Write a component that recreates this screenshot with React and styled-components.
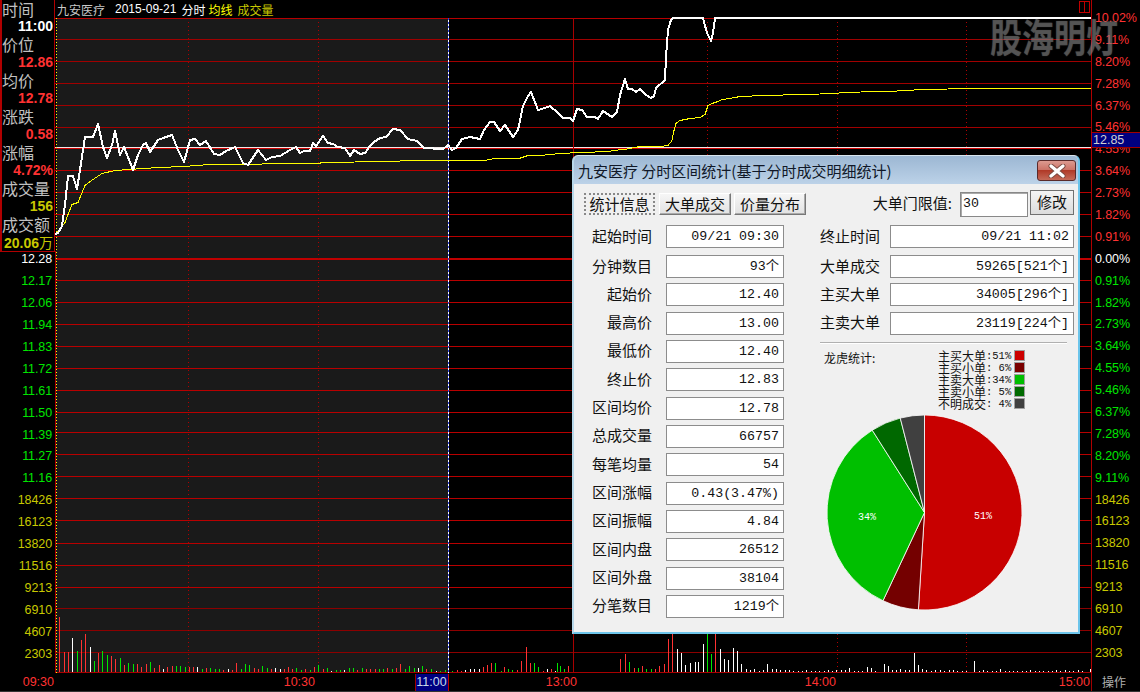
import React from "react";
import styled, { createGlobalStyle } from "styled-components";

const GlobalStyle = createGlobalStyle`
  html, body {
    margin: 0;
    padding: 0;
    background: #000;
    overflow: hidden;
  }
  * { box-sizing: border-box; }
`;

const LATIN = `"Liberation Sans", "Noto Sans CJK SC", sans-serif`;
const CJK = `"Noto Sans CJK SC", "Liberation Sans", sans-serif`;
const MONO = `"Liberation Mono", "Noto Sans CJK SC", monospace`;

const RED = "#ff3232";
const GREEN = "#00e600";
const YELLOW = "#c8c800";

const quote = [
  ["时间", "11:00", "#fff"],
  ["价位", "12.86", RED],
  ["均价", "12.78", RED],
  ["涨跌", "0.58", RED],
  ["涨幅", "4.72%", RED],
  ["成交量", "156", YELLOW],
];

const leftPrices = ["12.28", "12.17", "12.06", "11.94", "11.83", "11.72", "11.61", "11.50", "11.39", "11.27", "11.16"];
const volumes = ["18426", "16123", "13820", "11516", "9213", "6910", "4607", "2303"];
const upPercents = ["10.02%", "9.11%", "8.20%", "7.28%", "6.37%", "5.46%", "4.55%", "3.64%", "2.73%", "1.82%", "0.91%"];
const downPercents = ["0.91%", "1.82%", "2.73%", "3.64%", "4.55%", "5.46%", "6.37%", "7.28%", "8.20%", "9.11%"];

const gridY = [39, 61, 83, 105, 127, 170, 192, 214, 236, 280, 302, 324, 346, 368, 390, 412, 432, 454, 476, 498, 520, 543, 565, 587, 608, 630, 652];
const dottedX = [188, 318, 707, 837, 966];

const pricePoints = "55,234 58,233 62,226 65,205 68,176 73,176 77,189 80,170 85,137 93,137 98,124 103,147 107,158 112,145 115,131 120,155 124,147 133,170 138,155 143,145 146,143 150,152 158,140 163,138 172,135 178,150 184,162 190,140 195,139 200,145 206,141 214,154 220,155 226,151 235,147 243,163 248,165 258,150 266,160 272,157 280,156 290,150 296,147 300,153 304,151 310,151 313,143 316,146 323,136 328,143 333,144 338,147 345,148 350,156 354,150 360,154 365,153 370,146 374,142 380,138 386,137 393,129 400,130 408,139 417,141 424,148 430,148 437,149 443,149 448,145 452,150 456,148 462,139 470,137 480,139 484,130 490,122 494,122 500,131 505,125 513,137 518,130 523,106 528,96 531,92 538,110 545,108 550,106 558,113 563,118 570,118 573,121 577,109 582,110 587,117 595,117 598,119 603,111 612,117 617,112 620,95 625,79 628,89 632,89 636,92 640,89 646,95 651,98 654,96 656,88 665,80 666,57 668,30 671,20 673,18 703,18 707,33 711,41 713,33 715,18 1091,18";
const averagePoints = "55,234 60,229 65,222 68,214 72,204 78,202 85,185 93,179 102,173 115,170 143,168 160,167 183,166 210,164 247,164 277,163 320,163 321,162 390,161 410,160 484,160 495,158 519,158 528,155 540,155 560,153 580,152 610,151 612,150 625,149 640,146 660,146 668,145 672,140 674,130 676,123 680,120 690,118 700,117 705,114 708,105 712,103 718,101 722,99 730,98 740,96 765,95 838,93 840,92 882,91 912,90 916,89 980,88 1091,88";

// volume bars: [x, height, r/g/w]
const volumeBars = [
  [59,55,"r"],[64,20,"r"],[68,20,"r"],[72,34,"w"],[77,21,"g"],[81,32,"r"],[85,38,"r"],[90,25,"w"],[94,11,"g"],[98,19,"r"],
  [102,21,"g"],[107,17,"g"],[111,16,"r"],[115,13,"r"],[120,14,"g"],[124,7,"r"],[128,9,"g"],[133,8,"g"],[137,8,"r"],[141,5,"r"],
  [146,8,"r"],[150,10,"g"],[154,4,"r"],[159,7,"r"],[163,3,"w"],[167,5,"r"],[172,6,"r"],[176,6,"g"],[180,6,"g"],[185,5,"g"],
  [189,5,"r"],[193,5,"r"],[197,5,"w"],[202,3,"g"],[206,4,"r"],[210,4,"g"],[215,3,"g"],[219,3,"g"],[223,2,"r"],[228,3,"w"],
  [232,2,"r"],[236,9,"r"],[241,3,"g"],[245,8,"g"],[249,7,"g"],[254,4,"r"],[258,3,"r"],[262,6,"g"],[267,4,"g"],[271,3,"r"],
  [275,4,"w"],[280,3,"w"],[284,3,"r"],[288,5,"r"],[292,3,"r"],[296,4,"g"],[301,2,"g"],[305,3,"r"],[310,2,"g"],[314,5,"r"],
  [318,7,"g"],[323,3,"r"],[327,4,"g"],[331,1,"w"],[336,2,"g"],[340,2,"g"],[344,2,"w"],[349,4,"g"],[353,4,"g"],[357,2,"r"],
  [362,4,"g"],[366,3,"r"],[370,3,"r"],[375,3,"r"],[379,3,"g"],[383,3,"g"],[387,4,"r"],[392,3,"g"],[396,4,"r"],[400,8,"r"],
  [405,3,"g"],[409,6,"g"],[414,4,"g"],[418,4,"w"],[422,6,"g"],[426,3,"r"],[431,3,"g"],[436,1,"w"],[440,1,"g"],[445,2,"g"],
  [452,1,"g"],[457,2,"r"],[461,1,"r"],[465,2,"w"],[470,3,"w"],[474,3,"w"],[479,3,"w"],[483,5,"r"],[487,7,"r"],[491,9,"r"],
  [495,9,"g"],[501,1,"g"],[504,5,"r"],[508,3,"g"],[512,2,"g"],[517,2,"r"],[521,11,"r"],[526,25,"r"],[530,9,"r"],[534,9,"g"],
  [538,5,"g"],[543,1,"r"],[547,3,"w"],[551,3,"r"],[555,1,"w"],[557,9,"g"],[560,6,"g"],[564,3,"g"],[568,6,"r"],
  [620,13,"r"],[625,18,"r"],[629,10,"g"],[634,4,"r"],[638,4,"g"],[642,6,"r"],[646,3,"g"],[651,3,"g"],[655,3,"r"],[659,6,"r"],
  [664,8,"r"],[668,33,"r"],[672,38,"r"],[677,23,"w"],[681,19,"w"],[685,7,"w"],[690,9,"w"],[695,10,"w"],[698,10,"w"],[703,28,"w"],
  [707,38,"g"],[711,18,"g"],[715,38,"r"],[720,23,"w"],[724,13,"w"],[728,12,"w"],[733,24,"w"],[737,21,"w"],[741,8,"w"],[746,3,"w"],
  [750,2,"w"],[754,3,"w"],[759,1,"w"],[763,2,"w"],[767,8,"w"],[772,3,"w"],[776,3,"w"],[780,2,"w"],[785,2,"w"],[789,2,"w"],
  [793,1,"w"],[798,1,"w"],[802,1,"w"],[806,2,"w"],[811,1,"w"],[815,1,"w"],[819,1,"w"],[824,1,"w"],[828,2,"w"],[832,1,"w"],
  [836,2,"w"],[841,2,"w"],[845,2,"w"],[849,4,"w"],[854,1,"w"],[858,1,"w"],[862,1,"w"],[867,5,"w"],[871,4,"w"],[875,1,"w"],
  [884,8,"w"],[888,6,"w"],[892,2,"w"],[896,2,"w"],[900,3,"w"],[905,2,"w"],[909,2,"w"],[914,19,"w"],[918,7,"w"],[922,3,"w"],
  [926,2,"w"],[931,1,"w"],[935,2,"w"],[940,2,"w"],[944,1,"w"],[949,2,"w"],[953,2,"w"],[957,1,"w"],[962,1,"w"],[966,1,"w"],
  [974,11,"w"],[979,1,"w"],[983,2,"w"],[987,1,"w"],[992,1,"w"],[996,1,"w"],[1000,3,"w"],[1005,1,"w"],[1009,1,"w"],[1013,1,"w"],
  [1017,1,"w"],[1022,1,"w"],[1026,1,"w"],[1030,2,"w"],[1035,1,"w"],[1039,1,"w"],[1043,1,"w"],[1048,1,"w"],[1052,1,"w"],[1056,2,"w"],
  [1060,1,"w"],[1065,2,"w"],[1069,1,"w"],[1073,1,"w"],[1078,2,"w"],[1082,1,"w"],[1090,3,"w"],
];
const barColors = { r: "#ff3232", g: "#00e600", w: "#ffffff" };

const leftRows = [
  ["起始时间", "09/21 09:30"],
  ["分钟数目", "93个"],
  ["起始价", "12.40"],
  ["最高价", "13.00"],
  ["最低价", "12.40"],
  ["终止价", "12.83"],
  ["区间均价", "12.78"],
  ["总成交量", "66757"],
  ["每笔均量", "54"],
  ["区间涨幅", "0.43(3.47%)"],
  ["区间振幅", "4.84"],
  ["区间内盘", "26512"],
  ["区间外盘", "38104"],
  ["分笔数目", "1219个"],
];
const rightRows = [
  ["终止时间", "09/21 11:02"],
  ["大单成交", "59265[521个]"],
  ["主买大单", "34005[296个]"],
  ["主卖大单", "23119[224个]"],
];
const legend = [
  ["主买大单", ":51%", "#cc0000"],
  ["主买小单", ": 6%", "#7a0000"],
  ["主卖大单", ":34%", "#00bf00"],
  ["主卖小单", ": 5%", "#006a00"],
  ["不明成交", ": 4%", "#404040"],
];

// pie slices, cumulative percent from twelve o'clock
const PIE_R = 97.5;
const pieSlices = [
  [0, 51, "#c80000"],
  [51, 57, "#740000"],
  [57, 91, "#00bf00"],
  [91, 96, "#006800"],
  [96, 100, "#404040"],
];
function piePoint(percent) {
  const a = (percent / 100) * Math.PI * 2;
  return [PIE_R + PIE_R * Math.sin(a), PIE_R - PIE_R * Math.cos(a)];
}
function slicePath(from, to) {
  const [x1, y1] = piePoint(from);
  const [x2, y2] = piePoint(to);
  const large = to - from > 50 ? 1 : 0;
  return `M${PIE_R} ${PIE_R} L${x1} ${y1} A${PIE_R} ${PIE_R} 0 ${large} 1 ${x2} ${y2} Z`;
}

const Screen = styled.div`
  position: relative;
  width: 1140px;
  height: 692px;
  background: #000;
  display: grid;
  grid-template-columns: 55px 1036px 49px;
  grid-template-rows: 673px 19px;
  overflow: hidden;
  font-family: ${LATIN};
`;

const LeftRail = styled.div`
  display: flex;
  flex-direction: column;
`;

const QuoteBox = styled.div`
  height: 252px;
  border-left: 2px solid #b00000;
  border-right: 1px solid #b00000;
  border-bottom: 1px solid #b00000;
`;

const QuoteLabel = styled.div`
  height: 20px;
  line-height: 20px;
  font-family: ${CJK};
  font-size: 16px;
  color: #c0c0c0;
  white-space: nowrap;

  &:first-child {
    height: 18px;
    line-height: 18px;
  }
`;

const QuoteValue = styled.div`
  height: 16px;
  line-height: 16px;
  padding-right: 1px;
  text-align: right;
  font-size: 14px;
  font-weight: 700;
  color: ${(p) => p.$color};
  white-space: nowrap;

  span {
    font-family: ${CJK};
    font-weight: 400;
  }
`;

const AxisList = styled.div`
  display: flex;
  flex-direction: column;
  gap: ${(p) => p.$gap};
  padding-top: ${(p) => p.$pad || "0"};
`;

const AxisLabel = styled.div`
  height: 14px;
  line-height: 14px;
  font-size: 12.5px;
  letter-spacing: -0.1px;
  color: ${(p) => p.$color};
  text-align: ${(p) => p.$align};
  padding-right: ${(p) => (p.$align === "right" ? "3px" : "0")};
  padding-left: ${(p) => (p.$align === "left" ? "3px" : "0")};
  white-space: nowrap;
`;

const ChartColumn = styled.div`
  display: flex;
  flex-direction: column;
`;

const ChartHeader = styled.div`
  height: 18px;
  flex: none;
  display: flex;
  align-items: center;
  padding-left: 2px;
  font-family: ${CJK};
  font-size: 12px;
  white-space: nowrap;
`;

const HeaderItem = styled.span`
  color: ${(p) => p.$color};
  margin-right: ${(p) => p.$gap}px;
  font-family: ${(p) => (p.$latin ? LATIN : CJK)};
`;

const ChartSvg = styled.svg`
  display: block;
  flex: none;
  overflow: visible;
`;

const RightRail = styled.div`
  position: relative;
  border-left: 1px solid #b00000;
`;

const LastPrice = styled.div`
  position: absolute;
  left: 0;
  top: 132px;
  width: 48px;
  height: 16px;
  line-height: 15px;
  padding-left: 1px;
  background: #000080;
  border-top: 1px solid #a00000;
  border-bottom: 1px solid #a00000;
  font-size: 12.5px;
  color: #d0d0d0;
`;

const TimeAxis = styled.div`
  grid-column: 1 / -1;
  display: grid;
  grid-template-columns: 55px 261px 133px 129px 259px 254px 49px;
  border-bottom: 1px solid #333;
`;

const TimeCell = styled.div`
  line-height: 18px;
  font-size: 12.5px;
  color: ${RED};
  text-align: right;
  padding-right: 1px;
`;

const ActiveTime = styled.span`
  display: inline-block;
  width: 34px;
  height: 17px;
  line-height: 17px;
  margin-right: -1px;
  padding-right: 1px;
  background: #000080;
  border-left: 1px solid #a00000;
  border-right: 1px solid #c00000;
  color: #c8d8e8;
  text-align: center;
`;

const ActionCell = styled.div`
  line-height: 18px;
  padding-left: 10px;
  font-family: ${CJK};
  font-size: 12px;
  color: #b0b0b0;
  border-left: 1px solid #a00000;
`;

const Watermark = styled.div`
  position: absolute;
  left: 990px;
  top: 12px;
  font-family: ${CJK};
  font-size: 32px;
  font-weight: 700;
  line-height: 46px;
  color: rgba(128, 128, 128, 0.45);
  text-shadow: 0 0 1px rgba(128, 128, 128, 0.4);
  white-space: nowrap;
  transform: scaleY(1.22);
  pointer-events: none;
`;

const WindowIcon = styled.svg`
  position: absolute;
  left: 1079px;
  top: 1px;
`;

const Dialog = styled.div`
  position: absolute;
  left: 572px;
  top: 155px;
  width: 508px;
  height: 479px;
  display: flex;
  flex-direction: column;
  border-radius: 6px 6px 0 0;
  border: 2px solid #6cc4ea;
  border-top: 1px solid #d8e4ee;
  border-left-color: #b8d8ea;
  background: #f0f0f0;
  overflow: hidden;
  font-family: ${CJK};
  color: #111;
`;

const TitleBar = styled.div`
  position: relative;
  height: 28px;
  flex: none;
  padding-left: 4px;
  line-height: 30px;
  font-size: 15px;
  color: #101828;
  background: linear-gradient(#9cb7d3, #bcd2e8);
  white-space: nowrap;
`;

const CloseButton = styled.div`
  position: absolute;
  right: 2px;
  top: 4px;
  width: 39px;
  height: 21px;
  display: flex;
  align-items: center;
  justify-content: center;
  border: 1px solid #5a2a2a;
  border-radius: 3px;
  background: linear-gradient(#dc9a90 0%, #cc7468 45%, #b03a28 50%, #c46a58 100%);
`;

const DialogBody = styled.div`
  flex: 1;
  padding: 6px 4px 0 10px;
`;

const TopRow = styled.div`
  display: flex;
  align-items: flex-start;
  height: 27px;
  margin-bottom: 8px;
`;

const Tabs = styled.div`
  display: flex;
  gap: 3px;
  padding-top: 3px;
`;

const Tab = styled.div`
  width: 72px;
  height: 22px;
  line-height: 19px;
  text-align: center;
  font-size: 15px;
  background: linear-gradient(#f6f6f6, #e2e2e2);
  border: 1px solid;
  border-color: #fff #777 #777 #fff;
  box-shadow: inset -1px -1px 0 #aaa;
  ${(p) =>
    p.$active &&
    `
    width: 71px;
    background: #f0f0f0;
    border: 2px dotted #888;
    box-shadow: none;
    line-height: 17px;
    margin-right: 1px;
  `}
`;

const Threshold = styled.div`
  margin-left: auto;
  display: flex;
  align-items: flex-start;
  font-size: 15px;
  line-height: 25px;
  white-space: nowrap;
`;

const ThresholdInput = styled.div`
  width: 68px;
  height: 25px;
  margin: 2px 2px 0 8px;
  padding-left: 2px;
  line-height: 21px;
  border: 1px solid #888;
  box-shadow: inset 1px 1px 0 #aaa;
  background: #fff;
  font-family: ${MONO};
  font-size: 13.3px;
`;

const SmallButton = styled.div`
  width: 44px;
  height: 25px;
  line-height: 21px;
  text-align: center;
  font-size: 15px;
  border: 1px solid #707070;
  background: linear-gradient(#f4f4f4, #dcdcdc);
`;

const Columns = styled.div`
  display: flex;
`;

const Column = styled.div`
  width: ${(p) => p.$width}px;
  margin-right: ${(p) => p.$gap || 0}px;
  display: flex;
  flex-direction: column;
`;

const FieldRow = styled.div`
  display: flex;
  align-items: center;
  gap: ${(p) => p.$gap}px;
  height: 23px;
  margin-bottom: 5.33px;

  &:first-child {
    margin-bottom: 7px;
  }
`;

const FieldLabel = styled.div`
  width: ${(p) => p.$width}px;
  flex: none;
  padding-bottom: 3px;
  text-align: right;
  font-size: 15px;
  white-space: nowrap;
`;

const FieldValue = styled.div`
  flex: 1;
  height: 23px;
  line-height: 21px;
  padding-right: 4px;
  text-align: right;
  background: #fff;
  border: 1px solid #8c8c8c;
  font-family: ${MONO};
  font-size: 13.3px;
  white-space: pre;
`;

const Divider = styled.div`
  width: 247px;
  height: 2px;
  margin-top: 2px;
  background: #b0b0b0;
  border-bottom: 1px solid #fff;
`;

const StatsHead = styled.div`
  display: flex;
  justify-content: space-between;
  padding: 6px 49px 0 4px;
  height: 71px;
`;

const StatsTitle = styled.div`
  font-size: 12px;
  line-height: 16px;
  white-space: nowrap;
`;

const LegendList = styled.div`
  display: flex;
  flex-direction: column;
`;

const LegendRow = styled.div`
  display: flex;
  align-items: center;
  height: 12px;
  font-size: 12px;
  line-height: 12px;
  white-space: nowrap;
`;

const LegendPercent = styled.span`
  width: 26px;
  font-family: ${MONO};
  font-size: 10.5px;
  white-space: pre;
`;

const Swatch = styled.span`
  width: 11px;
  height: 11px;
  margin-left: 2px;
  background: ${(p) => p.$color};
  border: 1px solid #a0a0a0;
`;

const PieSvg = styled.svg`
  display: block;
  margin-left: 7px;
`;

function Chart() {
  return (
    <ChartSvg width="1036" height="655" viewBox="55 18 1036 655">
      <rect x="56" y="18" width="392" height="655" fill="#1a1a1a" />

      <g shapeRendering="crispEdges">
        {gridY.map((y) => (
          <line
            key={y}
            x1="55"
            x2="1091"
            y1={y + 0.5}
            y2={y + 0.5}
            stroke={y > 600 ? "#8c0000" : y < 148 ? "#a00000" : "#b80000"}
          />
        ))}
        <line x1="55" x2="1091" y1="18.5" y2="18.5" stroke="#b80000" />
        <line x1="55" x2="1091" y1="259" y2="259" stroke="#c00000" strokeWidth="2" />
        <line x1="55" x2="1091" y1="147.5" y2="147.5" stroke="#f0e8e8" />
        <line x1="55" x2="1091" y1="148.5" y2="148.5" stroke="#d00000" />
        <line x1="55" x2="1091" y1="672.5" y2="672.5" stroke="#a80000" />
        <line x1="55.5" x2="55.5" y1="251" y2="673" stroke="#b00000" />

        {dottedX.map((x) => (
          <line key={x} x1={x + 0.5} x2={x + 0.5} y1="18" y2="673" stroke="#b00000" strokeDasharray="1 3" />
        ))}
        <line x1="573.5" x2="573.5" y1="18" y2="673" stroke="#a80000" />
        <line x1="56.5" x2="56.5" y1="18" y2="673" stroke="#ffff00" strokeDasharray="1 2" />
        <line x1="448.5" x2="448.5" y1="18" y2="673" stroke="#ffffff" />
        <line x1="448.5" x2="448.5" y1="18" y2="673" stroke="#3040e0" strokeDasharray="2 2" />

        {volumeBars.map(([x, h, c]) => (
          <rect key={x} x={x} y={672 - h} width="1" height={h} fill={barColors[c]} />
        ))}

        <polyline points={averagePoints} transform="translate(0 0.5)" fill="none" stroke="#ffff00" strokeWidth="1" />
        <polyline points={pricePoints} fill="none" stroke="#ffffff" strokeWidth="2" strokeLinejoin="round" />
      </g>
    </ChartSvg>
  );
}

function Pie() {
  return (
    <PieSvg width="195" height="195" viewBox="0 0 195 195">
      {pieSlices.map(([from, to, color]) => (
        <path key={from} d={slicePath(from, to)} fill={color} stroke="#fff" strokeWidth="0.8" strokeLinejoin="bevel" />
      ))}
      <text x="156" y="104" fontFamily={MONO} fontSize="10" fill="#fff" textAnchor="middle">51%</text>
      <text x="40" y="105" fontFamily={MONO} fontSize="10" fill="#fff" textAnchor="middle">34%</text>
    </PieSvg>
  );
}

function StatsDialog() {
  return (
    <Dialog>
      <TitleBar>
        九安医疗 分时区间统计(基于分时成交明细统计)
        <CloseButton>
          <svg width="18" height="14" viewBox="0 0 18 14">
            <path d="M3 2 L15 12 M15 2 L3 12" stroke="#7a4a40" strokeWidth="5" strokeLinecap="round" />
            <path d="M3 2 L15 12 M15 2 L3 12" stroke="#fff" strokeWidth="3.2" strokeLinecap="round" />
          </svg>
        </CloseButton>
      </TitleBar>
      <DialogBody>
        <TopRow>
          <Tabs>
            <Tab $active>统计信息</Tab>
            <Tab>大单成交</Tab>
            <Tab>价量分布</Tab>
          </Tabs>
          <Threshold>
            大单门限值:
            <ThresholdInput>30</ThresholdInput>
            <SmallButton>修改</SmallButton>
          </Threshold>
        </TopRow>
        <Columns>
          <Column $width={200} $gap={36}>
            {leftRows.map(([label, value]) => (
              <FieldRow key={label} $gap={14}>
                <FieldLabel $width={68}>{label}</FieldLabel>
                <FieldValue>{value}</FieldValue>
              </FieldRow>
            ))}
          </Column>
          <Column $width={254}>
            {rightRows.map(([label, value]) => (
              <FieldRow key={label} $gap={10}>
                <FieldLabel $width={60}>{label}</FieldLabel>
                <FieldValue>{value}</FieldValue>
              </FieldRow>
            ))}
            <Divider />
            <StatsHead>
              <StatsTitle>龙虎统计:</StatsTitle>
              <LegendList>
                {legend.map(([name, percent, color]) => (
                  <LegendRow key={name}>
                    {name}
                    <LegendPercent>{percent}</LegendPercent>
                    <Swatch $color={color} />
                  </LegendRow>
                ))}
              </LegendList>
            </StatsHead>
            <Pie />
          </Column>
        </Columns>
      </DialogBody>
    </Dialog>
  );
}

export default function App() {
  return (
    <>
      <GlobalStyle />
      <Screen>
        <LeftRail>
          <QuoteBox>
            {quote.map(([label, value, color]) => (
              <React.Fragment key={label}>
                <QuoteLabel>{label}</QuoteLabel>
                <QuoteValue $color={color}>{value}</QuoteValue>
              </React.Fragment>
            ))}
            <QuoteLabel>成交额</QuoteLabel>
            <QuoteValue $color={YELLOW}>
              20.06<span>万</span>
            </QuoteValue>
          </QuoteBox>
          <AxisList $gap="7.94px">
            {leftPrices.map((v, i) => (
              <AxisLabel key={v} $align="right" $color={i === 0 ? "#fff" : GREEN}>{v}</AxisLabel>
            ))}
            {volumes.map((v) => (
              <AxisLabel key={v} $align="right" $color={YELLOW}>{v}</AxisLabel>
            ))}
          </AxisList>
        </LeftRail>

        <ChartColumn>
          <ChartHeader>
            <HeaderItem $color="#c8c8c8" $gap={10}>九安医疗</HeaderItem>
            <HeaderItem $color="#fff" $gap={5} $latin>2015-09-21</HeaderItem>
            <HeaderItem $color="#fff" $gap={3}>分时</HeaderItem>
            <HeaderItem $color="#ffff00" $gap={5}>均线</HeaderItem>
            <HeaderItem $color={YELLOW} $gap={0}>成交量</HeaderItem>
          </ChartHeader>
          <Chart />
        </ChartColumn>

        <RightRail>
          <AxisList $gap="7.9px" $pad="11px">
            {upPercents.map((v) => (
              <AxisLabel key={"u" + v} $align="left" $color={RED}>{v}</AxisLabel>
            ))}
            <AxisLabel $align="left" $color="#fff">0.00%</AxisLabel>
            {downPercents.map((v) => (
              <AxisLabel key={"d" + v} $align="left" $color={GREEN}>{v}</AxisLabel>
            ))}
            {volumes.map((v) => (
              <AxisLabel key={v} $align="left" $color={YELLOW}>{v}</AxisLabel>
            ))}
          </AxisList>
          <LastPrice>12.85</LastPrice>
        </RightRail>

        <TimeAxis>
          <TimeCell>09:30</TimeCell>
          <TimeCell>10:30</TimeCell>
          <TimeCell><ActiveTime>11:00</ActiveTime></TimeCell>
          <TimeCell>13:00</TimeCell>
          <TimeCell>14:00</TimeCell>
          <TimeCell>15:00</TimeCell>
          <ActionCell>操作</ActionCell>
        </TimeAxis>

        <Watermark>股海明灯</Watermark>
        <WindowIcon width="11" height="12" viewBox="0 0 11 12">
          <rect x="0.5" y="0.5" width="10" height="11" fill="none" stroke="#c00000" />
          <line x1="5.5" x2="5.5" y1="0" y2="12" stroke="#c00000" />
        </WindowIcon>
        <StatsDialog />
      </Screen>
    </>
  );
}
